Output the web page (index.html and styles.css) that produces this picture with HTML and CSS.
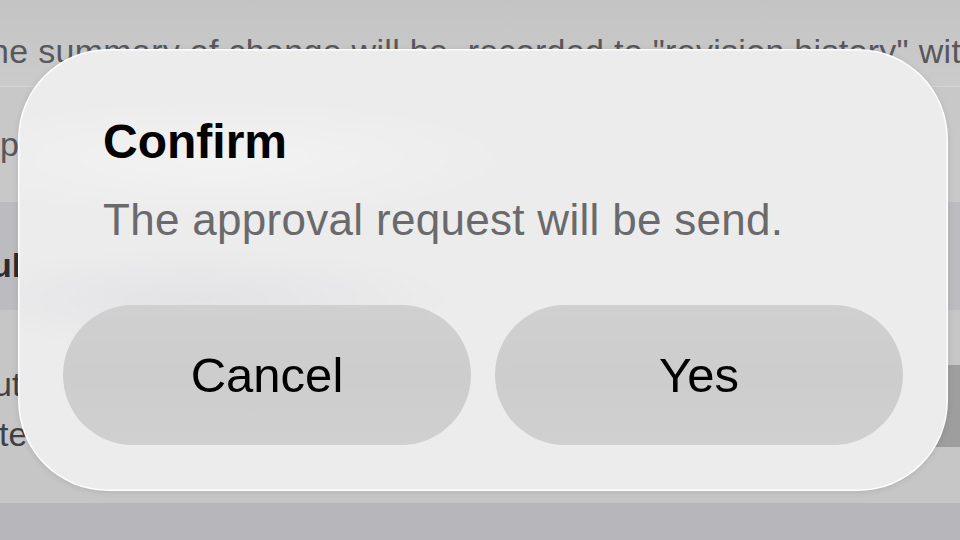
FILE: index.html
```html
<!DOCTYPE html>
<html lang="en">
<head>
<meta charset="utf-8">
<title>Confirm</title>
<link rel="stylesheet" href="styles.css">
</head>
<body>
<div class="screen">
  <div class="page">
    <div class="row r1"><span class="bgtext">he summary of change will be&nbsp; recorded to "revision history" with</span></div>
    <div class="row r2"><span class="bgtext">p</span></div>
    <div class="row r3"><span class="bgtext strong">ul</span></div>
    <div class="row r4">
      <div class="lines">
        <div class="line first">ut</div>
        <div class="line second">te</div>
      </div>
      <div class="field"></div>
    </div>
    <div class="row r5"></div>
  </div>
  <div class="overlay">
    <div class="dialog">
      <div class="texts">
        <div class="title">Confirm</div>
        <div class="message">The approval request will be send.</div>
      </div>
      <div class="actions">
        <button class="btn">Cancel</button>
        <button class="btn">Yes</button>
      </div>
    </div>
  </div>
</div>
</body>
</html>
```
FILE: styles.css
```css
* { box-sizing: border-box; }
html, body { margin: 0; padding: 0; }
body {
  width: 960px;
  height: 540px;
  overflow: hidden;
  font-family: "Liberation Sans", Arial, sans-serif;
  background: #c7c7c8;
}
.screen {
  position: relative;
  width: 960px;
  height: 540px;
  overflow: hidden;
}
.page {
  display: flex;
  flex-direction: column;
  width: 960px;
  height: 540px;
}
.row {
  width: 960px;
  overflow: hidden;
  white-space: nowrap;
}
.bgtext {
  display: block;
  font-size: 34px;
  line-height: 40px;
  letter-spacing: 0.3px;
  color: #57585c;
}
.r1 {
  height: 87px;
  padding-top: 31px;
  background: linear-gradient(#c4c4c5, #cbcbcc);
  border-bottom: 1px solid #d3d3d7;
}
.r1 .bgtext { margin-left: -10px; }
.r2 {
  height: 115px;
  padding-top: 37px;
  background: #c8c8c9;
}
.r2 .bgtext { margin-left: 0; }
.r3 {
  height: 108px;
  padding-top: 43px;
  background: #bcbcc0;
}
.strong { font-weight: 700; color: #2c2c30; margin-left: -9px; letter-spacing: 0; }
.r4 {
  height: 193px;
  display: flex;
  justify-content: space-between;
  background: #c6c6c7;
}
.lines {
  padding-top: 49px;
}
.line {
  font-size: 34px;
  line-height: 50px;
  color: #3e4148;
}
.first { margin-left: -7px; }
.second { margin-left: -1px; }
.field {
  width: 200px;
  height: 82px;
  margin-top: 55px;
  background: #9e9e9f;
}
.r5 {
  height: 37px;
  background: #b7b7bb;
}

.overlay {
  position: absolute;
  inset: 0;
  padding: 49px 0 0 18px;
}
.dialog {
  width: 930px;
  height: 442px;
  padding: 64px 45px 46px;
  border-radius: 90px;
  background:
    radial-gradient(ellipse 300px 60px at 200px 110px, rgba(255,255,255,0.35), rgba(255,255,255,0) 100%),
    radial-gradient(ellipse 260px 50px at 180px 250px, rgba(200,200,205,0.25), rgba(200,200,205,0) 100%),
    #ececed;
  box-shadow: inset 0 0 0 1.5px rgba(255,255,255,0.95), 0 1px 6px rgba(0,0,0,0.10);
  display: flex;
  flex-direction: column;
}
.texts {
  padding: 0 40px;
}
.title {
  font-size: 48px;
  line-height: 58px;
  font-weight: 700;
  color: #000;
}
.message {
  margin-top: 23px;
  font-size: 44px;
  line-height: 52px;
  color: #6a6a6c;
  letter-spacing: 0.3px;
}
.actions {
  margin-top: 59px;
  display: flex;
  gap: 24px;
}
.btn {
  flex: 1;
  height: 140px;
  border: none;
  border-radius: 70px;
  background: linear-gradient(180deg, #d0d0d1 0%, #cdcdce 50%, #d0d0d1 100%);
  font-family: "Liberation Sans", Arial, sans-serif;
  font-size: 49px;
  color: #000;
  padding: 0;
}
```
